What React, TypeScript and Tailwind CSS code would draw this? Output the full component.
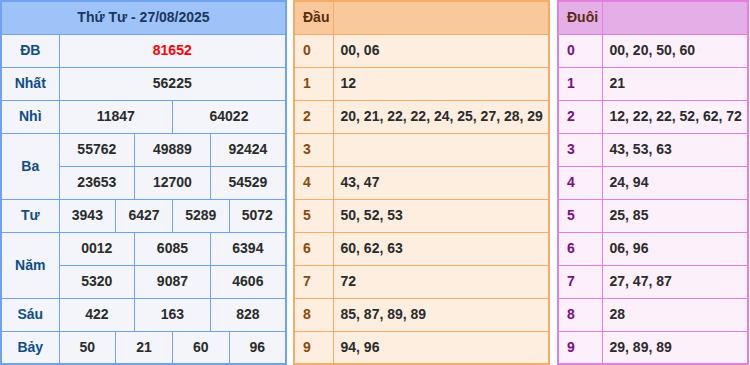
import React from 'react';

const font = { fontFamily: '"Liberation Sans", Arial, sans-serif' };

const dau: string[] = [
  '00, 06',
  '12',
  '20, 21, 22, 22, 24, 25, 27, 28, 29',
  '',
  '43, 47',
  '50, 52, 53',
  '60, 62, 63',
  '72',
  '85, 87, 89, 89',
  '94, 96',
];

const duoi: string[] = [
  '00, 20, 50, 60',
  '21',
  '12, 22, 22, 52, 62, 72',
  '43, 53, 63',
  '24, 94',
  '25, 85',
  '06, 96',
  '27, 47, 87',
  '28',
  '29, 89, 89',
];

const lbl = 'border border-[#6fa3f1] h-[33px] p-0 text-center text-[14px] font-bold text-[#0f4c88]';
const num = 'border border-[#6fa3f1] h-[33px] p-0 text-center text-[14px] font-bold text-[#2b2b2b]';

function ResultTable() {
  return (
    <table className="table-fixed border-collapse border-2 border-[#6fa3f1] bg-[#f3f5fa] w-[287px]">
      <colgroup>
        <col className="w-[58px]" />
        {Array.from({ length: 12 }).map((_, i) => (
          <col key={i} />
        ))}
      </colgroup>
      <tbody>
        <tr>
          <td colSpan={13} className="border border-[#6fa3f1] bg-[#9dc3f8] h-[33px] p-0 text-center text-[14px] font-bold text-[#1a3760]">
            Thứ Tư - 27/08/2025
          </td>
        </tr>
        <tr>
          <td className={lbl}>ĐB</td>
          <td colSpan={12} className={num + ' !text-[#ff0000]'}>81652</td>
        </tr>
        <tr>
          <td className={lbl}>Nhất</td>
          <td colSpan={12} className={num}>56225</td>
        </tr>
        <tr>
          <td className={lbl}>Nhì</td>
          <td colSpan={6} className={num}>11847</td>
          <td colSpan={6} className={num}>64022</td>
        </tr>
        <tr>
          <td rowSpan={2} className={lbl}>Ba</td>
          <td colSpan={4} className={num}>55762</td>
          <td colSpan={4} className={num}>49889</td>
          <td colSpan={4} className={num}>92424</td>
        </tr>
        <tr>
          <td colSpan={4} className={num}>23653</td>
          <td colSpan={4} className={num}>12700</td>
          <td colSpan={4} className={num}>54529</td>
        </tr>
        <tr>
          <td className={lbl}>Tư</td>
          <td colSpan={3} className={num}>3943</td>
          <td colSpan={3} className={num}>6427</td>
          <td colSpan={3} className={num}>5289</td>
          <td colSpan={3} className={num}>5072</td>
        </tr>
        <tr>
          <td rowSpan={2} className={lbl}>Năm</td>
          <td colSpan={4} className={num}>0012</td>
          <td colSpan={4} className={num}>6085</td>
          <td colSpan={4} className={num}>6394</td>
        </tr>
        <tr>
          <td colSpan={4} className={num}>5320</td>
          <td colSpan={4} className={num}>9087</td>
          <td colSpan={4} className={num}>4606</td>
        </tr>
        <tr>
          <td className={lbl}>Sáu</td>
          <td colSpan={4} className={num}>422</td>
          <td colSpan={4} className={num}>163</td>
          <td colSpan={4} className={num}>828</td>
        </tr>
        <tr>
          <td className={lbl}>Bảy</td>
          <td colSpan={3} className={num}>50</td>
          <td colSpan={3} className={num}>21</td>
          <td colSpan={3} className={num}>60</td>
          <td colSpan={3} className={num}>96</td>
        </tr>
      </tbody>
    </table>
  );
}

function DauTable() {
  return (
    <table className="table-fixed border-collapse border-2 border-[#f6ab66] bg-[#fdeee0] w-[257px]">
      <colgroup>
        <col className="w-[39px]" />
        <col />
      </colgroup>
      <tbody>
        <tr className="bg-[#f9c99b]">
          <td className="border border-[#f6ab66] h-[33px] px-2 py-0 text-left text-[14px] font-bold text-[#5c2c0c]">Đầu</td>
          <td className="border border-[#f6ab66] h-[33px] p-0"></td>
        </tr>
        {dau.map((v, i) => (
          <tr key={i}>
            <td className="border border-[#f6ab66] h-[33px] px-2 py-0 text-left text-[14px] font-bold text-[#8b4a06]">{i}</td>
            <td className="border border-[#f6ab66] h-[33px] pl-[7px] pr-0 py-0 text-left text-[14px] font-bold text-[#2b2b2b] whitespace-nowrap">{v}</td>
          </tr>
        ))}
      </tbody>
    </table>
  );
}

function DuoiTable() {
  return (
    <table className="table-fixed border-collapse border-2 border-[#e57fdf] bg-[#fcf0fb] w-[192px]">
      <colgroup>
        <col className="w-[44px]" />
        <col />
      </colgroup>
      <tbody>
        <tr className="bg-[#e4aee6]">
          <td className="border border-[#e57fdf] h-[33px] px-2 py-0 text-left text-[14px] font-bold text-[#5a2a12]">Đuôi</td>
          <td className="border border-[#e57fdf] h-[33px] p-0"></td>
        </tr>
        {duoi.map((v, i) => (
          <tr key={i}>
            <td className="border border-[#e57fdf] h-[33px] px-2 py-0 text-left text-[14px] font-bold text-[#7f0b86]">{i}</td>
            <td className="border border-[#e57fdf] h-[33px] pl-[7px] pr-0 py-0 text-left text-[14px] font-bold text-[#2b2b2b] whitespace-nowrap">{v}</td>
          </tr>
        ))}
      </tbody>
    </table>
  );
}

export default function App() {
  return (
    <div className="w-[750px] h-[365px] bg-white flex items-start" style={font}>
      <ResultTable />
      <div className="ml-[6px]">
        <DauTable />
      </div>
      <div className="ml-[7px]">
        <DuoiTable />
      </div>
    </div>
  );
}
